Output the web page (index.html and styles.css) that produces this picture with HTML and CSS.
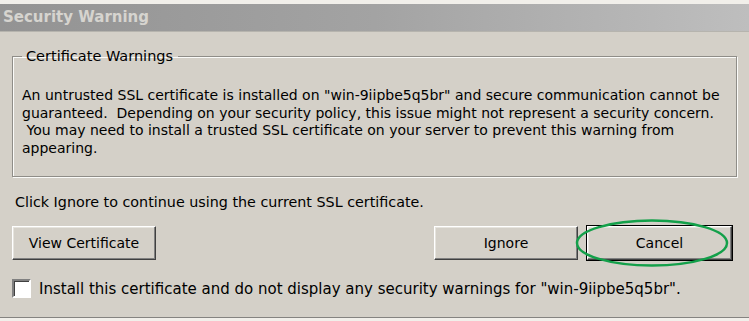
FILE: index.html
```html
<!DOCTYPE html>
<html lang="en">
<head>
    <meta charset="UTF-8">
    <title>Security Warning</title>
    <link rel="stylesheet" href="styles.css">
</head>
<body>
    <div class="window">
        <div class="titlebar">Security Warning</div>
        <div class="content">
            <fieldset class="group">
                <legend>Certificate Warnings</legend>
                <p class="warning">An untrusted SSL certificate is installed on "win-9iipbe5q5br" and secure communication cannot be<br>guaranteed.&nbsp; Depending on your security policy, this issue might not represent a security concern.<br>&nbsp;You may need to install a trusted SSL certificate on your server to prevent this warning from<br>appearing.</p>
            </fieldset>
            <p class="hint">Click Ignore to continue using the current SSL certificate.</p>
            <div class="actions">
                <button class="btn">View Certificate</button>
                <div class="spacer"></div>
                <button class="btn">Ignore</button>
                <div class="default-wrap">
                    <button class="btn btn-default">Cancel</button>
                    <svg class="circle" viewBox="0 0 156 50" width="156" height="50">
                        <ellipse cx="78" cy="25" rx="75" ry="22.5" fill="none" stroke="#13a04a" stroke-width="2.5"/>
                    </svg>
                </div>
            </div>
            <label class="check">
                <span class="box"></span>
                <span>Install this certificate and do not display any security warnings for "win-9iipbe5q5br".</span>
            </label>
        </div>
        <div class="bottom-edge"></div>
    </div>
</body>
</html>
```

FILE: styles.css
```css
body {
    margin: 0;
    background-color: #d4d0c8;
    font-family: "DejaVu Sans", Verdana, sans-serif;
    font-size: 14px;
    color: #000;
}
.window {
    border-top: 4px solid #f1efea;
}
.titlebar {
    height: 27px;
    line-height: 27px;
    padding-left: 3px;
    background: linear-gradient(to right, #939393, #a3a3a3 50%, #bebebe);
    color: #d6d4cf;
    font-weight: bold;
    font-size: 15px;
    border-bottom: 1px solid #b6b4ae;
}
.content {
    padding: 0 12px;
}
.group {
    box-sizing: border-box;
    min-width: 0;
    width: 100%;
    margin: 16px 0 0 0;
    padding: 23px 8px 19px 9px;
    border: 1px solid #8f8d88;
    box-shadow: inset 1px 1px #fbfbf9, 1px 1px #fbfbf9;
}
.group legend {
    padding: 0 5px 0 4px;
    margin-left: 0;
    font-size: 14.5px;
}
.warning {
    margin: 0;
    line-height: 17.5px;
    white-space: nowrap;
}
.hint {
    margin: 17px 0 0 3px;
    font-size: 14.3px;
}
.actions {
    display: flex;
    align-items: center;
    margin-top: 16px;
}
.spacer {
    flex: 1;
}
.btn {
    width: 144px;
    height: 34px;
    background-color: #d4d0c8;
    font-family: inherit;
    font-size: 14px;
    color: #000;
    border: 1px solid;
    border-color: #ffffff #404040 #404040 #ffffff;
    box-shadow: inset -1px -1px #808080, inset 1px 1px #e6e4de;
    padding: 0;
}
.default-wrap {
    position: relative;
    margin-left: 9px;
    margin-right: 5px;
}
.btn-default {
    display: block;
    width: 145px;
    outline: 1px solid #000;
}
.circle {
    position: absolute;
    left: -13px;
    top: -8px;
    pointer-events: none;
}
.check {
    display: flex;
    align-items: center;
    gap: 8px;
    margin-top: 19px;
    font-size: 15px;
}
.box {
    width: 15px;
    height: 15px;
    background: #fff;
    border: 2px solid;
    border-color: #808080 #fff #fff #808080;
    box-shadow: inset 1px 1px #404040;
}
.bottom-edge {
    margin-top: 19px;
    border-top: 1px solid #858380;
    height: 4px;
    background: #f1efea;
}
```
